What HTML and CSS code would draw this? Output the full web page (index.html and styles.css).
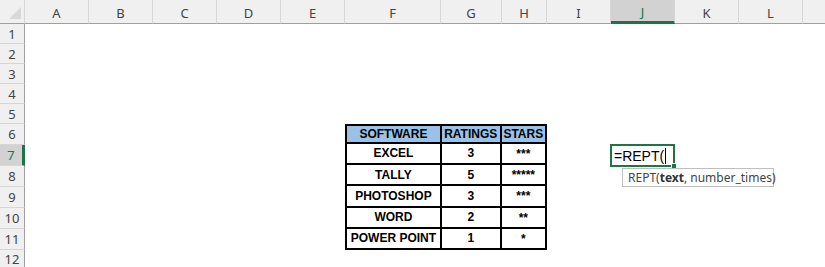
FILE: index.html
```html
<!DOCTYPE html>
<html lang="en">
<head>
  <meta charset="utf-8" />
  <title>REPT</title>
  <link rel="stylesheet" href="styles.css">
</head>
<body>
<div class="sheet">
  <div class="ch corner"><span class="tri"></span></div>
  <div class="ch">A</div>
  <div class="ch">B</div>
  <div class="ch">C</div>
  <div class="ch">D</div>
  <div class="ch">E</div>
  <div class="ch">F</div>
  <div class="ch">G</div>
  <div class="ch">H</div>
  <div class="ch">I</div>
  <div class="ch sel">J</div>
  <div class="ch">K</div>
  <div class="ch">L</div>
  <div class="ch last"></div>

  <div class="rh">1</div>
  <div class="rh">2</div>
  <div class="rh">3</div>
  <div class="rh">4</div>
  <div class="rh">5</div>
  <div class="rh">6</div>
  <div class="rh sel">7</div>
  <div class="rh">8</div>
  <div class="rh">9</div>
  <div class="rh">10</div>
  <div class="rh">11</div>
  <div class="rh">12</div>

  <table class="data">
    <tr><th>SOFTWARE</th><th>RATINGS</th><th>STARS</th></tr>
    <tr><td>EXCEL</td><td>3</td><td class="stars">***</td></tr>
    <tr><td>TALLY</td><td>5</td><td class="stars">*****</td></tr>
    <tr><td>PHOTOSHOP</td><td>3</td><td class="stars">***</td></tr>
    <tr><td>WORD</td><td>2</td><td class="stars">**</td></tr>
    <tr><td>POWER POINT</td><td>1</td><td class="stars">*</td></tr>
  </table>

  <div class="active">=REPT(<span class="caret"></span><span class="handle"></span>
    <div class="tip">REPT(<b>text</b>, number_times)</div>
  </div>
</div>
</body>
</html>
```

FILE: styles.css
```css
*{margin:0;padding:0;box-sizing:border-box;}
body{width:825px;height:267px;overflow:hidden;background:#fff;}
.sheet{display:grid;width:825px;height:267px;
  grid-template-columns:25px 64px 64px 64px 64px 64px 96px 61px 45px 64px 64px 64px 64px 1fr;
  grid-template-rows:24px repeat(5,20px) repeat(6,21px) 1fr;
  font-family:"Noto Sans","Open Sans",sans-serif;}
.ch{background:#f0f0f0;border-bottom:1px solid #9f9f9f;border-right:1px solid #d6d6d6;
  color:#444;font-size:13px;display:flex;align-items:center;justify-content:center;padding-top:2px;}
.ch.sel{background:#d2d2d2;border-bottom:3px solid #217346;color:#217346;}
.ch.last{border-right:none;}
.corner{position:relative;}
.tri{position:absolute;right:3px;bottom:4px;width:0;height:0;
  border-left:12px solid transparent;border-bottom:12px solid #d8d8d8;}
.rh{grid-column:1;background:#f0f0f0;border-right:1px solid #9f9f9f;border-bottom:1px solid #d6d6d6;
  color:#444;font-size:13px;display:flex;align-items:center;justify-content:center;}
.rh.sel{background:#d2d2d2;border-right:3px solid #217346;color:#217346;}
.data{grid-column:7/10;grid-row:7/13;border-collapse:collapse;width:100%;height:100%;
  font-family:"Liberation Sans",Arial,sans-serif;font-weight:bold;font-size:12px;color:#000;}
.data th,.data td{border:2px solid #000;text-align:center;padding:0;}
.data th{background:#9bc2e6;}
.data td.stars{font-size:12px;vertical-align:top;padding-top:3px;}
.active{grid-column:11;grid-row:8;position:relative;border:2px solid #217346;margin:-1px 0 -1px -1px;
  font-family:"Liberation Sans",Arial,sans-serif;font-size:14px;color:#000;
  display:flex;align-items:center;padding-left:2px;}
.caret{display:inline-block;width:1px;height:16px;background:#000;margin-left:1px;}
.handle{position:absolute;right:-4px;bottom:-4px;width:6px;height:6px;background:#217346;border:1px solid #fff;}
.tip{position:absolute;left:10px;top:22px;width:152px;height:19px;background:#fff;border:1px solid #bebebe;
  font-family:"Noto Sans","Open Sans",sans-serif;font-size:12px;color:#444;white-space:nowrap;
  padding-left:5px;line-height:17px;}
.tip b{color:#333;}
```
